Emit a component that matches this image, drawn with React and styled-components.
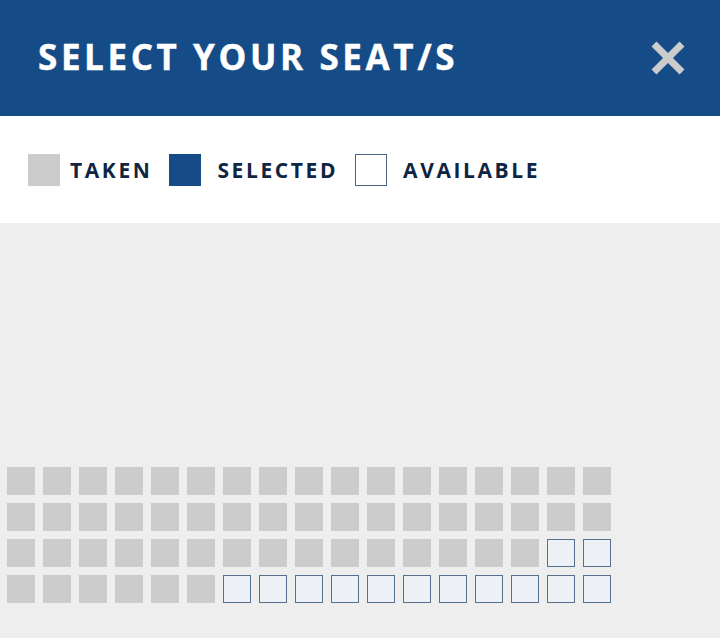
import React from 'react';
import styled, { createGlobalStyle } from 'styled-components';

const GlobalStyle = createGlobalStyle`
  html, body {
    margin: 0;
    padding: 0;
    background: #eeeeee;
    font-family: "Open Sans", "Liberation Sans", sans-serif;
  }
`;

const Page = styled.div`
  width: 720px;
  height: 638px;
  display: flex;
  flex-direction: column;
  background: #eeeeee;
  overflow: hidden;
`;

const Header = styled.header`
  height: 116px;
  flex: none;
  background: #154c87;
  display: flex;
  align-items: center;
  justify-content: space-between;
  padding: 0 34px 0 38px;
  box-sizing: border-box;
`;

const Title = styled.h1`
  margin: 0;
  color: #ffffff;
  font-size: 35px;
  font-weight: 700;
  letter-spacing: 3.6px;
  line-height: 1;
  padding-bottom: 4px;
  -webkit-text-stroke: 0.4px #ffffff;
`;

const CloseButton = styled.button`
  border: 0;
  background: none;
  padding: 0;
  width: 36px;
  height: 36px;
  display: flex;
  cursor: pointer;
`;

const Legend = styled.div`
  height: 107px;
  flex: none;
  background: #ffffff;
  display: flex;
  align-items: center;
  padding-left: 28px;
  box-sizing: border-box;
`;

const LegendItem = styled.div`
  display: flex;
  align-items: center;
  margin-right: 17px;
`;

const Swatch = styled.span`
  width: 32px;
  height: 32px;
  box-sizing: border-box;
  margin-right: ${p => p.$gap}px;
  background: ${p => (p.$kind === 'taken' ? '#cccccc' : p.$kind === 'selected' ? '#154c87' : '#ffffff')};
  border: ${p => (p.$kind === 'available' ? '1px solid #4b6684' : 'none')};
`;

const LegendLabel = styled.span`
  color: #0f2541;
  font-size: 21px;
  font-weight: 700;
  letter-spacing: 2.6px;
`;

const SeatArea = styled.div`
  flex: 1;
  padding: 244px 0 0 7px;
  display: flex;
  flex-direction: column;
  gap: 8px;
`;

const SeatRow = styled.div`
  display: flex;
  gap: 8px;
`;

const Seat = styled.div`
  width: 28px;
  height: 28px;
  box-sizing: border-box;
  background: ${p => (p.$taken ? '#cccccc' : '#edf0f4')};
  border: ${p => (p.$taken ? 'none' : '1.5px solid #56708f')};
`;

const rows = [
  { taken: 17 },
  { taken: 17 },
  { taken: 15 },
  { taken: 6 },
];

export default function App() {
  return (
    <Page>
      <GlobalStyle />
      <Header>
        <Title>SELECT YOUR SEAT/S</Title>
        <CloseButton aria-label="Close">
          <svg width="36" height="36" viewBox="0 0 36 36">
            <path d="M4 4 L32 32 M32 4 L4 32" stroke="#cccccc" strokeWidth="7" strokeLinecap="butt" />
          </svg>
        </CloseButton>
      </Header>
      <Legend>
        <LegendItem>
          <Swatch $kind="taken" $gap={10} />
          <LegendLabel>TAKEN</LegendLabel>
        </LegendItem>
        <LegendItem>
          <Swatch $kind="selected" $gap={16} />
          <LegendLabel>SELECTED</LegendLabel>
        </LegendItem>
        <LegendItem>
          <Swatch $kind="available" $gap={16} />
          <LegendLabel>AVAILABLE</LegendLabel>
        </LegendItem>
      </Legend>
      <SeatArea>
        {rows.map((row, r) => (
          <SeatRow key={r}>
            {Array.from({ length: 17 }).map((_, i) => (
              <Seat key={i} $taken={i < row.taken} />
            ))}
          </SeatRow>
        ))}
      </SeatArea>
    </Page>
  );
}
